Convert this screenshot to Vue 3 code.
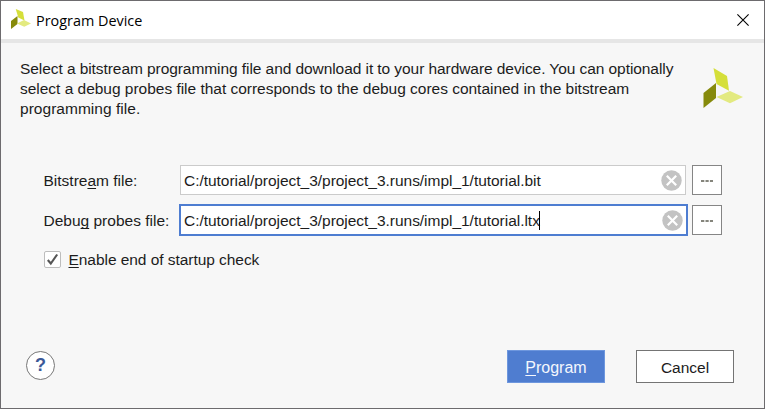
<script setup>
import { ref } from 'vue'

const fields = ref([
  { pre: 'Bitstre', key: 'a', post: 'm file:', value: 'C:/tutorial/project_3/project_3.runs/impl_1/tutorial.bit', focused: false },
  { pre: 'Debu', key: 'g', post: ' probes file:', value: 'C:/tutorial/project_3/project_3.runs/impl_1/tutorial.ltx', focused: true },
])
const description = [
  'Select a bitstream programming file and download it to your hardware device. You can optionally',
  'select a debug probes file that corresponds to the debug cores contained in the bitstream',
  'programming file.',
]
</script>

<template>
  <div class="dialog">
    <header class="titlebar">
      <svg class="logo-small" viewBox="0 0 40 40">
        <path d="M9.500 0 24 6 27 23 14.500 17Z" fill="#d5df3a" />
        <path d="M0 24 13 14V30L0 40Z" fill="#868a0b" />
        <path d="M12 29 26 22 40 29 26.500 35.500Z" fill="#e3ea80" />
      </svg>
      <span class="title">Program Device</span>
      <svg class="close" viewBox="0 0 12 12"><path d="M.4.4 11.600 11.600M11.600.4.4 11.600" /></svg>
    </header>
    <main class="body">
      <section class="intro">
        <div class="description">
          <div v-for="line in description" :key="line"><span>{{ line }}</span></div>
        </div>
        <svg class="logo" viewBox="0 0 40 40">
          <path d="M10.500 0 24 8 26 22.800 13.500 16Z" fill="#d5df3a" />
          <path d="M.5 25 13 15V30L.5 40Z" fill="#868a0b" />
          <path d="M13.500 29 27 23 40 29 27 35.200Z" fill="#e3ea80" />
        </svg>
      </section>
      <section class="form">
        <div v-for="f in fields" :key="f.pre" class="row">
          <label class="label"><span>{{ f.pre }}<u>{{ f.key }}</u>{{ f.post }}</span></label>
          <div class="input" :class="{ focused: f.focused }">
            <span class="value">{{ f.value }}</span><i v-if="f.focused" class="caret"></i>
            <svg class="clear" viewBox="0 0 21 21">
              <circle cx="10.500" cy="10.500" r="10.200" fill="#c3c3c3" />
              <path d="M5.800 5.800 15.200 15.200M15.200 5.800 5.800 15.200" stroke="#fff" stroke-width="2.200" />
            </svg>
          </div>
          <button class="browse">
            <svg viewBox="0 0 12 2"><path d="M0 1H3.300M4.500 1H7.700M8.900 1H12" stroke="#85857c" stroke-width="2" /></svg>
          </button>
        </div>
        <label class="check">
          <span class="box"><svg viewBox="0 0 15 15"><path d="M2.800 8 5.800 11.500 12.200 2.500" /></svg></span>
          <span class="check-label"><u>E</u>nable end of startup check</span>
        </label>
      </section>
      <footer class="footer">
        <button class="help"><span>?</span></button>
        <button class="btn primary"><span><u>P</u>rogram</span></button>
        <button class="btn"><span>Cancel</span></button>
      </footer>
    </main>
  </div>
</template>

<style>
body { overflow: hidden; }
</style>

<style scoped>
* { box-sizing: border-box; }
.dialog {
  width: 765px;
  height: 409px;
  border: 1px solid #6d6b6e;
  background: #f7f7f7;
  color: #1c1c1c;
  font-family: "Liberation Sans", Arial, sans-serif;
  font-size: 15.5px;
  display: flex;
  flex-direction: column;
}
svg { display: block; flex: none; }
u { text-decoration: underline; text-decoration-thickness: 1px; text-underline-offset: 2px; text-decoration-skip-ink: none; }
button { padding: 0; font: inherit; color: inherit; }
.titlebar {
  height: 42px;
  flex: none;
  display: flex;
  align-items: center;
  background: #fff;
  border-bottom: 4px solid #e6e6e6;
  padding: 0 15px 0 10px;
}
.logo-small { width: 20px; height: 20px; margin-right: 5px; margin-top: -2px; }
.title { font-family: "Open Sans", sans-serif; font-size: 14.4px; color: #000; white-space: nowrap; }
.close { width: 12px; height: 12px; margin-left: auto; stroke: #000; stroke-width: 1.1; }
.body { flex: 1; display: flex; flex-direction: column; }
.intro { display: flex; justify-content: space-between; padding: 16px 21px 0 19px; }
.description { line-height: 20px; white-space: nowrap; letter-spacing: -0.07px; }
.description div:nth-child(2) { letter-spacing: -0.02px; }
.description div:nth-child(3) { letter-spacing: 0.03px; }
.logo { width: 40px; height: 40px; margin-top: 9px; }
.form { padding: 41px 42px 0 42.5px; display: flex; flex-direction: column; }
.row { display: flex; align-items: center; height: 40px; }
.label { width: 136.5px; flex: none; white-space: nowrap; padding-top: 2px; }
.input {
  width: 506px;
  height: 30px;
  border: 1px solid #cbcbcb;
  background: #fff;
  display: flex;
  align-items: center;
  padding: 0 3px;
  margin-right: 6px;
  flex: none;
  white-space: nowrap;
}
.value { letter-spacing: -0.03px; padding-top: 2px; }
.input.focused { height: 32px; width: 509px; border: 2px solid #4e7dd1; margin-left: -1px; margin-right: 4px; }
.caret { width: 1px; height: 19px; background: #000; margin-left: -1px; }
.clear { width: 21px; height: 21px; margin-left: auto; }
.browse {
  width: 30px;
  height: 30px;
  flex: none;
  border: 1px solid #858585;
  background: #fff;
  display: flex;
  align-items: center;
  justify-content: center;
}
.browse svg { width: 12px; height: 2px; margin-top: 2px; }
.check { display: flex; align-items: center; height: 38px; gap: 8px; }
.check-label { letter-spacing: -0.05px; padding-top: 2px; }
.box { width: 17px; height: 17px; border: 1px solid #bdbdbd; border-radius: 2px; background: #fff; }
.box path { fill: none; stroke: #555; stroke-width: 2.1; }
.box svg { width: 15px; height: 15px; }
.footer { margin-top: auto; padding: 0 30px 25px 25px; display: flex; align-items: center; }
.help {
  width: 29px;
  height: 29px;
  border: 1px solid #777;
  border-radius: 50%;
  background: #fff;
  color: #3b5998;
  font-weight: bold;
  font-size: 18px;
  line-height: 27px;
  margin: -3px auto 0 0;
}
.btn { width: 98px; height: 33px; border: 1px solid #747474; background: #fff; margin-left: 31px; padding-top: 2px; }
.primary { background: #4f7dd0; border-color: #6e97de; color: #f4f7fd; font-size: 16px; }
</style>
